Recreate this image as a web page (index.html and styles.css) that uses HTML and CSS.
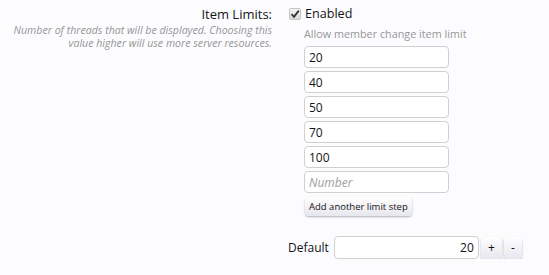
FILE: index.html
```html
<!DOCTYPE html>
<html>
<head>
<meta charset="utf-8">
<link rel="stylesheet" href="styles.css">
</head>
<body>
<div class="row">
  <div class="label-col">
    <div class="label">Item Limits:</div>
    <div class="explain">Number of threads that will be displayed. Choosing this value higher will use more server resources.</div>
  </div>
  <div class="ctrl-col">
    <label class="check"><span class="cb"><svg width="10" height="10" viewBox="0 0 10 10"><path d="M1.5 5.2 L4 7.8 L8.8 1.6" fill="none" stroke="#333" stroke-width="1.8"/></svg></span><span>Enabled</span></label>
    <div class="hint">Allow member change item limit</div>
    <div class="list">
      <input class="box" type="text" value="20">
      <input class="box" type="text" value="40">
      <input class="box" type="text" value="50">
      <input class="box" type="text" value="70">
      <input class="box" type="text" value="100">
      <input class="box" type="text" placeholder="Number">
    </div>
    <button class="btn add">Add another limit step</button>
    <div class="default">
      <span class="dlabel">Default</span>
      <input class="box num" type="text" value="20">
      <button class="btn spin">+</button>
      <button class="btn spin minus">-</button>
    </div>
  </div>
</div>
</body>
</html>
```
FILE: styles.css
```css
html, body {
  margin: 0;
  padding: 0;
  background: #fcfcff;
  font-family: "Open Sans", sans-serif;
  color: #141414;
}
.row {
  display: flex;
  padding-top: 4px;
}
.label-col {
  width: 272px;
  text-align: right;
}
.label {
  font-size: 13px;
  line-height: 20px;
}
.explain {
  font-size: 10.6px;
  font-style: italic;
  color: #969696;
  line-height: 13px;
  padding-left: 10px;
}
.ctrl-col {
  padding-left: 17px;
  display: flex;
  flex-direction: column;
  align-items: flex-start;
}
.check {
  display: flex;
  align-items: center;
  font-size: 12.6px;
  line-height: 20px;
}
.cb {
  box-sizing: border-box;
  width: 12px;
  height: 12px;
  border: 1px solid #c4c4c4;
  border-radius: 2px;
  background: linear-gradient(#f4f4f4, #dcdcdc);
  margin-right: 4px;
  display: flex;
  align-items: center;
  justify-content: center;
}
.hint {
  font-size: 10.8px;
  color: #969696;
  padding-left: 15px;
  line-height: 16px;
  margin-top: 2px;
}
.list {
  display: flex;
  flex-direction: column;
  gap: 3px;
  margin-left: 15px;
  margin-top: 4px;
}
.box {
  box-sizing: border-box;
  width: 145px;
  height: 22px;
  border: 1px solid #d0d0d0;
  border-radius: 4px;
  background: #fff;
  font-family: "Open Sans", sans-serif;
  font-size: 12px;
  padding: 0 4px;
  color: #141414;
}
.box::placeholder {
  color: #a0a0a0;
  font-style: italic;
}
.btn {
  font-family: "Open Sans", sans-serif;
  font-size: 9.5px;
  color: #141414;
  border: none;
  border-radius: 4px;
  background: linear-gradient(#ffffff, #e6e6ee);
  box-shadow: 0 1px 2px rgba(0,0,0,0.3);
  padding: 0 4px;
  height: 19px;
}
.add {
  margin-left: 16px;
  margin-top: 4px;
}
.default {
  display: flex;
  align-items: center;
  margin-top: 20px;
  margin-left: -1px;
  gap: 2px;
}
.dlabel {
  font-size: 12px;
  margin-right: 3px;
}
.num {
  text-align: right;
  height: 23px;
}
.spin {
  width: 21px;
  height: 22px;
  font-size: 12px;
  padding: 0;
}
.minus {
  width: 18px;
}
```
